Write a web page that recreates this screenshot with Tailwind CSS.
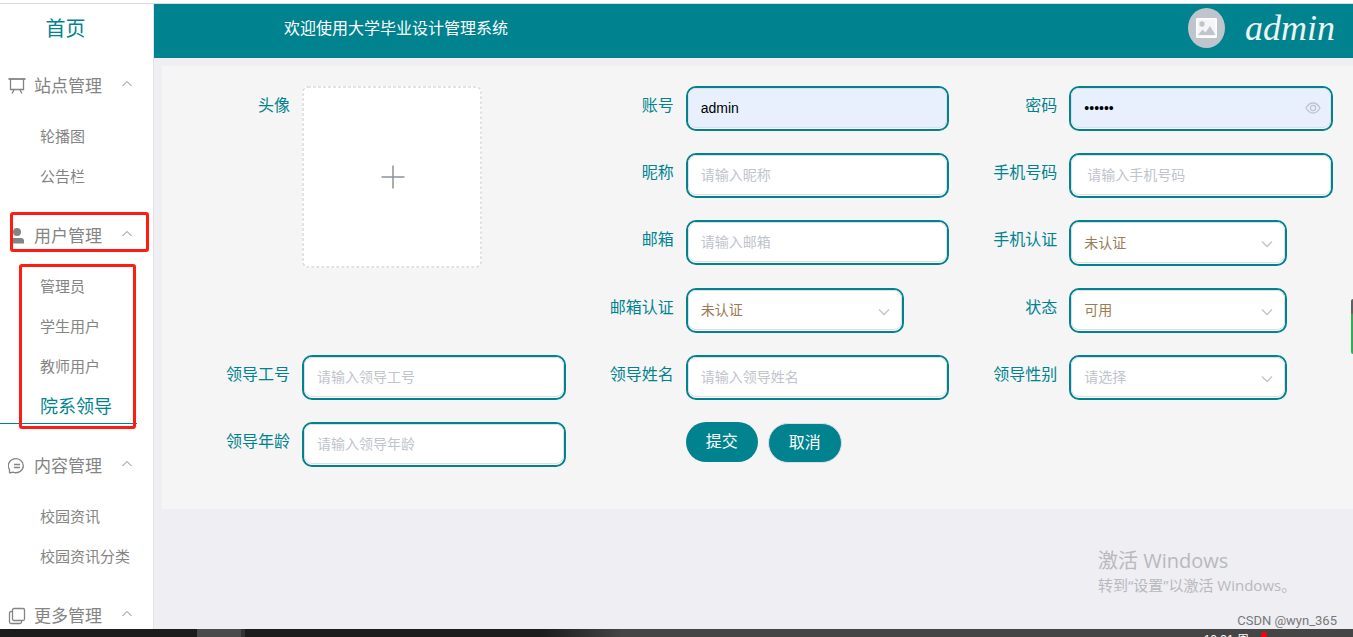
<!DOCTYPE html>
<html lang="zh-CN">
<head>
<meta charset="utf-8">
<title>大学毕业设计管理系统</title>
<script src="https://cdn.jsdelivr.net/npm/@tailwindcss/browser@4"></script>
</head>
<body class="relative flex h-screen flex-col overflow-hidden bg-[#eeeef3] pt-[3px] font-['Liberation_Sans','Noto_Sans_CJK_SC',sans-serif]">
<svg class="hidden" aria-hidden="true">
  <symbol id="up" viewBox="0 0 12 8"><path d="M1.500 6 6 1.500 10.500 6" fill="none" stroke="currentColor"/></symbol>
  <symbol id="down" viewBox="0 0 12 8"><path d="M1 1.500 6 6.500l5-5" fill="none" stroke="currentColor" stroke-width="1.300"/></symbol>
</svg>
<div class="absolute inset-x-0 top-0 h-[3px] bg-white"></div>
<div class="flex min-h-0 flex-1 border-t border-[#d9dbdf]">
  <nav class="w-[154px] shrink-0 overflow-hidden border-r border-[#e2e2e6] bg-white text-[15px] text-[#848484]">
    <a href="#" class="block h-[52px] pr-[22px] text-center text-xl leading-[50px] text-[#00838f]">首页</a>
    <section class="mb-[10px]">
      <button class="flex h-[60px] w-full items-center pl-2 text-[17px]">
        <svg class="mr-2 size-[18px]" viewBox="0 0 18 18" fill="none" stroke="currentColor" stroke-width="1.300"><path d="M.5 2h17" stroke-width="1.800"/><path d="M2.500 2v10.500h13V2M6 13l-2 3.500M12 13l2 3.500"/></svg><span class="pt-[2px]">站点管理</span>
        <svg class="mb-1 ml-[19px] h-2 w-3"><use href="#up"/></svg>
      </button>
      <a href="#" class="block h-10 pl-10 leading-[42px]">轮播图</a>
      <a href="#" class="block h-10 pl-10 leading-[42px]">公告栏</a>
    </section>
    <section class="relative mb-[12px]">
      <button class="flex h-[60px] w-full items-center pl-2 text-[17px]">
        <svg class="mr-2 size-[18px]" viewBox="0 0 18 18" fill="currentColor"><circle cx="9" cy="5" r="4"/><path d="M2 16.500v-2.500q0-3 3-3h8q3 0 3 3v2.500z"/></svg><span class="pt-[2px]">用户管理</span>
        <svg class="mb-1 ml-[19px] h-2 w-3"><use href="#up"/></svg>
      </button>
      <a href="#" class="block h-10 pl-10 leading-[42px]">管理员</a>
      <a href="#" class="block h-10 pl-10 leading-[42px]">学生用户</a>
      <a href="#" class="block h-10 pl-10 leading-[42px]">教师用户</a>
      <a href="#" aria-current="page" class="mr-4 block h-[38px] border-b border-[#00838f] pl-10 text-lg leading-[42px] text-[#00838f]">院系领导</a>
      <div class="absolute top-[6px] left-[10px] h-10 w-[139px] rounded-[3px] border-3 border-[#ff1c13]"></div>
      <div class="absolute top-[58px] left-[19px] h-[165px] w-[117px] rounded-[3px] border-3 border-[#ff1c13]"></div>
    </section>
    <section class="mb-[10px]">
      <button class="flex h-[60px] w-full items-center pl-2 text-[17px]">
        <svg class="mr-2 size-[18px]" viewBox="0 0 18 18" fill="none" stroke="currentColor" stroke-width="1.300"><path d="M1.500 16V12.500A7.500 7 0 1 1 5 15.200L1.500 16M6 7.500h6M6 10.500h6"/></svg><span class="pt-[2px]">内容管理</span>
        <svg class="mb-1 ml-[19px] h-2 w-3"><use href="#up"/></svg>
      </button>
      <a href="#" class="block h-10 pl-10 leading-[42px]">校园资讯</a>
      <a href="#" class="block h-10 pl-10 leading-[42px]">校园资讯分类</a>
    </section>
    <section>
      <button class="flex h-[60px] w-full items-center pl-2 text-[17px]">
        <svg class="mr-2 size-[18px]" viewBox="0 0 18 18" fill="none" stroke="currentColor" stroke-width="1.300"><rect x="4.500" y="1.500" width="12" height="12" rx="1.500"/><path d="M4 4.500H3Q1.500 4.500 1.500 6v9q0 1.500 1.500 1.500h9q1.500 0 1.500-1.500v-1"/></svg><span class="pt-[2px]">更多管理</span>
        <svg class="mb-1 ml-[19px] h-2 w-3"><use href="#up"/></svg>
      </button>
    </section>
  </nav>

  <div class="flex min-w-0 flex-1 flex-col">
    <header class="flex h-[54px] shrink-0 items-center bg-[#00838f] pr-[18px] pb-[6px] pl-[130px] text-white">
      <h1 class="flex-1 pt-[2px] text-base">欢迎使用大学毕业设计管理系统</h1>
      <svg class="mr-5 h-10 w-[37px]" viewBox="0 0 37 40"><ellipse cx="18.500" cy="20" rx="18.500" ry="20" fill="#c0c4cc"/><rect x="8" y="10" width="21" height="20" rx="1" fill="#fff"/><rect x="9.500" y="11.500" width="18" height="17" fill="#f4f5f6"/><circle cx="14" cy="16" r="2.700" fill="#c0c4cc"/><path d="M10 27l4.500-5.500 3 3L22 18l5.500 9z" fill="#c0c4cc"/></svg>
      <span class="font-['Liberation_Serif',serif] text-4xl text-[#eef3f3] italic">admin</span>
    </header>

    <main class="mt-2 ml-2 bg-[#f5f5f5] px-5 pt-5 pb-[42px]">
      <form class="grid grid-cols-3 gap-y-[22px] text-sm">
        <div class="row-span-4 flex">
          <span class="w-[120px] shrink-0 pr-3 text-right text-base leading-10 text-[#00838f]">头像</span>
          <button type="button" aria-label="上传头像" class="relative grid h-[182px] w-[180px] place-items-center rounded-md bg-white text-[#8c939d]">
            <svg class="absolute inset-0 size-full" viewBox="0 0 180 182"><rect x="1" y="1" width="178" height="180" rx="5" fill="none" stroke="#d9d9d9" stroke-width="1.500" stroke-dasharray="3 2"/></svg>
            <svg class="ml-[2px] size-6" viewBox="0 0 24 24" stroke="currentColor" stroke-width="1.500"><path d="M12 .5v23M.5 12h23"/></svg>
          </button>
        </div>
        <div class="flex">
          <label for="account" class="w-[120px] shrink-0 pr-3 text-right text-base leading-10 text-[#00838f]">账号</label>
          <div class="h-[45px] flex-1 rounded-[10px] border-2 border-[#00838f] bg-white pb-px"><input id="account" value="admin" class="size-full rounded-lg border border-[#dcdfe6] bg-[#e8f0fe] px-3 text-black"></div>
        </div>
        <div class="flex">
          <label for="pwd" class="w-[120px] shrink-0 pr-3 text-right text-base leading-10 text-[#00838f]">密码</label>
          <div class="relative h-[45px] flex-1 rounded-[10px] border-2 border-[#00838f] bg-white pb-px"><input id="pwd" type="password" value="123456" class="size-full rounded-lg border border-[#dcdfe6] bg-[#e8f0fe] px-3 text-black">
            <button type="button" aria-label="显示密码" class="absolute top-[14px] right-[10px] text-[#c0c4cc]"><svg class="h-3 w-4" viewBox="0 0 16 12" fill="none" stroke="currentColor" stroke-width="1.300"><path d="M1 6q2.800-5 7-5t7 5q-2.800 5-7 5T1 6z"/><circle cx="8" cy="6" r="2.600"/></svg></button></div>
        </div>
        <div class="flex">
          <label for="nick" class="w-[120px] shrink-0 pr-3 text-right text-base leading-10 text-[#00838f]">昵称</label>
          <div class="h-[45px] flex-1 rounded-[10px] border-2 border-[#00838f] bg-white pb-px"><input id="nick" placeholder="请输入昵称" class="size-full rounded-lg border border-[#dcdfe6] bg-white px-3 placeholder:text-[#c0c4cc]"></div>
        </div>
        <div class="flex">
          <label for="phone" class="w-[120px] shrink-0 pr-3 text-right text-base leading-10 text-[#00838f]">手机号码</label>
          <div class="h-[45px] flex-1 rounded-[10px] border-2 border-[#00838f] bg-white pb-px"><input id="phone" placeholder="请输入手机号码" class="size-full rounded-lg border border-[#dcdfe6] bg-white px-[15px] placeholder:text-[#c0c4cc]"></div>
        </div>
        <div class="flex">
          <label for="mail" class="w-[120px] shrink-0 pr-3 text-right text-base leading-10 text-[#00838f]">邮箱</label>
          <div class="h-[45px] flex-1 rounded-[10px] border-2 border-[#00838f] bg-white pb-px"><input id="mail" placeholder="请输入邮箱" class="size-full rounded-lg border border-[#dcdfe6] bg-white px-3 placeholder:text-[#c0c4cc]"></div>
        </div>
        <div class="flex">
          <label for="phoneAuth" class="w-[120px] shrink-0 pr-3 text-right text-base leading-10 text-[#00838f]">手机认证</label>
          <div class="relative h-[46px] w-[218px] rounded-[10px] border-2 border-[#00838f] bg-white pb-px"><select id="phoneAuth" class="size-full appearance-none rounded-lg border border-[#dcdfe6] bg-white px-3 text-[#997b55]"><option>未认证</option></select><svg class="pointer-events-none absolute top-[18px] right-[12px] h-2 w-3 text-[#c0c4cc]"><use href="#down"/></svg></div>
        </div>
        <div class="flex">
          <label for="mailAuth" class="w-[120px] shrink-0 pr-3 text-right text-base leading-10 text-[#00838f]">邮箱认证</label>
          <div class="relative h-[45px] w-[218px] rounded-[10px] border-2 border-[#00838f] bg-white pb-px"><select id="mailAuth" class="size-full appearance-none rounded-lg border border-[#dcdfe6] bg-white px-3 text-[#997b55]"><option>未认证</option></select><svg class="pointer-events-none absolute top-[18px] right-[12px] h-2 w-3 text-[#c0c4cc]"><use href="#down"/></svg></div>
        </div>
        <div class="flex">
          <label for="state" class="w-[120px] shrink-0 pr-3 text-right text-base leading-10 text-[#00838f]">状态</label>
          <div class="relative h-[45px] w-[218px] rounded-[10px] border-2 border-[#00838f] bg-white pb-px"><select id="state" class="size-full appearance-none rounded-lg border border-[#dcdfe6] bg-white px-3 text-[#997b55]"><option>可用</option></select><svg class="pointer-events-none absolute top-[18px] right-[12px] h-2 w-3 text-[#c0c4cc]"><use href="#down"/></svg></div>
        </div>
        <div class="flex">
          <label for="no" class="w-[120px] shrink-0 pr-3 text-right text-base leading-10 text-[#00838f]">领导工号</label>
          <div class="h-[45px] flex-1 rounded-[10px] border-2 border-[#00838f] bg-white pb-px"><input id="no" placeholder="请输入领导工号" class="size-full rounded-lg border border-[#dcdfe6] bg-white px-3 placeholder:text-[#c0c4cc]"></div>
        </div>
        <div class="flex">
          <label for="name" class="w-[120px] shrink-0 pr-3 text-right text-base leading-10 text-[#00838f]">领导姓名</label>
          <div class="h-[45px] flex-1 rounded-[10px] border-2 border-[#00838f] bg-white pb-px"><input id="name" placeholder="请输入领导姓名" class="size-full rounded-lg border border-[#dcdfe6] bg-white px-3 placeholder:text-[#c0c4cc]"></div>
        </div>
        <div class="flex">
          <label for="sex" class="w-[120px] shrink-0 pr-3 text-right text-base leading-10 text-[#00838f]">领导性别</label>
          <div class="relative h-[45px] w-[218px] rounded-[10px] border-2 border-[#00838f] bg-white pb-px"><select id="sex" class="size-full appearance-none rounded-lg border border-[#dcdfe6] bg-white px-3 text-[#c0c4cc]"><option>请选择</option></select><svg class="pointer-events-none absolute top-[18px] right-[12px] h-2 w-3 text-[#c0c4cc]"><use href="#down"/></svg></div>
        </div>
        <div class="flex">
          <label for="age" class="w-[120px] shrink-0 pr-3 text-right text-base leading-10 text-[#00838f]">领导年龄</label>
          <div class="h-[45px] flex-1 rounded-[10px] border-2 border-[#00838f] bg-white pb-px"><input id="age" placeholder="请输入领导年龄" class="size-full rounded-lg border border-[#dcdfe6] bg-white px-3 placeholder:text-[#c0c4cc]"></div>
        </div>
        <div class="flex gap-[10px] pl-[120px] text-base text-white">
          <button class="h-10 w-[72px] rounded-full bg-[#00838f]">提交</button>
          <button type="button" class="mt-px h-10 w-[74px] rounded-full border border-[#dcdfe6] bg-[#00838f]">取消</button>
        </div>
      </form>
    </main>
  </div>
</div>

<div class="pointer-events-none absolute right-[52px] bottom-[42px] w-[203px] whitespace-nowrap text-[#b9b9bd] font-['Open_Sans','Noto_Sans_CJK_SC',sans-serif]">
  <p class="text-xl leading-7">激活 Windows</p>
  <p class="text-[15px] leading-5">转到“设置”以激活 Windows。</p>
</div>
<p class="pointer-events-none absolute right-4 bottom-[6px] font-['Roboto',sans-serif] text-[13px] leading-5 text-[#77777b]">CSDN @wyn_365</p>
<div class="absolute top-[299px] right-0 h-[55px] w-[2px] rounded-l bg-linear-to-b from-[#606060] from-25% to-[#2fae55] to-30%"></div>

<footer class="relative flex h-2 shrink-0 overflow-hidden bg-linear-to-r from-[#1c1c1c] from-40% to-[#454545] to-46%">
  <div class="ml-[197px] w-11 bg-[#4a4a4a]"></div>
  <div class="w-1 bg-[#333]"></div>
  <p class="absolute top-[3px] right-[104px] text-xs leading-4 text-white">10:31 周</p>
  <span class="absolute top-[3px] right-[86px] size-[6px] rounded-full bg-[#ff0000]"></span>
</footer>
</body>
</html>
